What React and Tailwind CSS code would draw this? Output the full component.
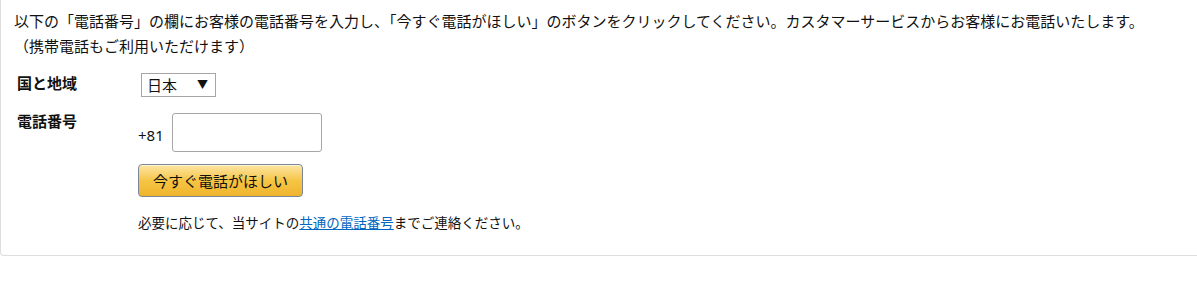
import React, { useState } from "react";

const font = { fontFamily: '"Noto Sans CJK JP", "Noto Sans", sans-serif' };

const App = () => {
  const [country, setCountry] = useState("JP");
  const [phone, setPhone] = useState("");

  return (
    <div className="w-[1197px] h-[285px] overflow-hidden bg-white text-[#111] text-[15px]" style={font}>
      <div className="w-[1220px] h-[256px] border border-t-0 border-[#dddddd] rounded-b-[4px] pt-[8px] pl-[13px]">
        <p className="leading-[25px]">
          以下の「電話番号」の欄にお客様の電話番号を入力し、「今すぐ電話がほしい」のボタンをクリックしてください。カスタマーサービスからお客様にお電話いたします。
          <br />
          （携帯電話もご利用いただけます）
        </p>

        <div className="flex mt-[13px]">
          <div className="w-[127px] pl-[3px] pt-[2px] font-bold leading-[20px]">国と地域</div>
          <div className="relative pt-[2px]">
            <select
              value={country}
              onChange={e => setCountry(e.target.value)}
              className="appearance-none w-[75px] h-[24px] border border-[#a6a6a6] bg-white pl-[5px] text-[15px] leading-[20px] outline-none"
              style={font}
            >
              <option value="JP">日本</option>
            </select>
            <span className="absolute right-[8px] top-[5px] text-[11px] pointer-events-none">▼</span>
          </div>
        </div>

        <div className="flex mt-[16px]">
          <div className="w-[124px] pl-[3px] font-bold leading-[16px]">電話番号</div>
          <div className="flex items-center">
            <span className="mt-[4px] mr-[8px] leading-[20px]" style={{ fontFamily: '"Noto Sans", sans-serif' }}>+81</span>
            <input
              type="text"
              value={phone}
              onChange={e => setPhone(e.target.value)}
              className="w-[150px] h-[39px] border border-[#a6a6a6] rounded-[3px] px-2 outline-none"
            />
          </div>
        </div>

        <div className="pl-[124px] mt-[12px]">
          <button
            className="w-[165px] h-[33px] rounded-[4px] border border-[#7c869a] bg-gradient-to-b from-[#fde5a0] via-[#f6c544] to-[#efb42c] text-[15px] text-[#111] leading-[20px] shadow-[inset_0_1px_0_rgba(255,255,255,0.6)]"
            style={font}
          >
            今すぐ電話がほしい
          </button>
          <p className="mt-[15px] text-[13.5px] leading-[20px]">
            必要に応じて、当サイトの
            <a href="#" className="text-[#0066c0] underline">共通の電話番号</a>
            までご連絡ください。
          </p>
        </div>
      </div>
    </div>
  );
};

export default App;
